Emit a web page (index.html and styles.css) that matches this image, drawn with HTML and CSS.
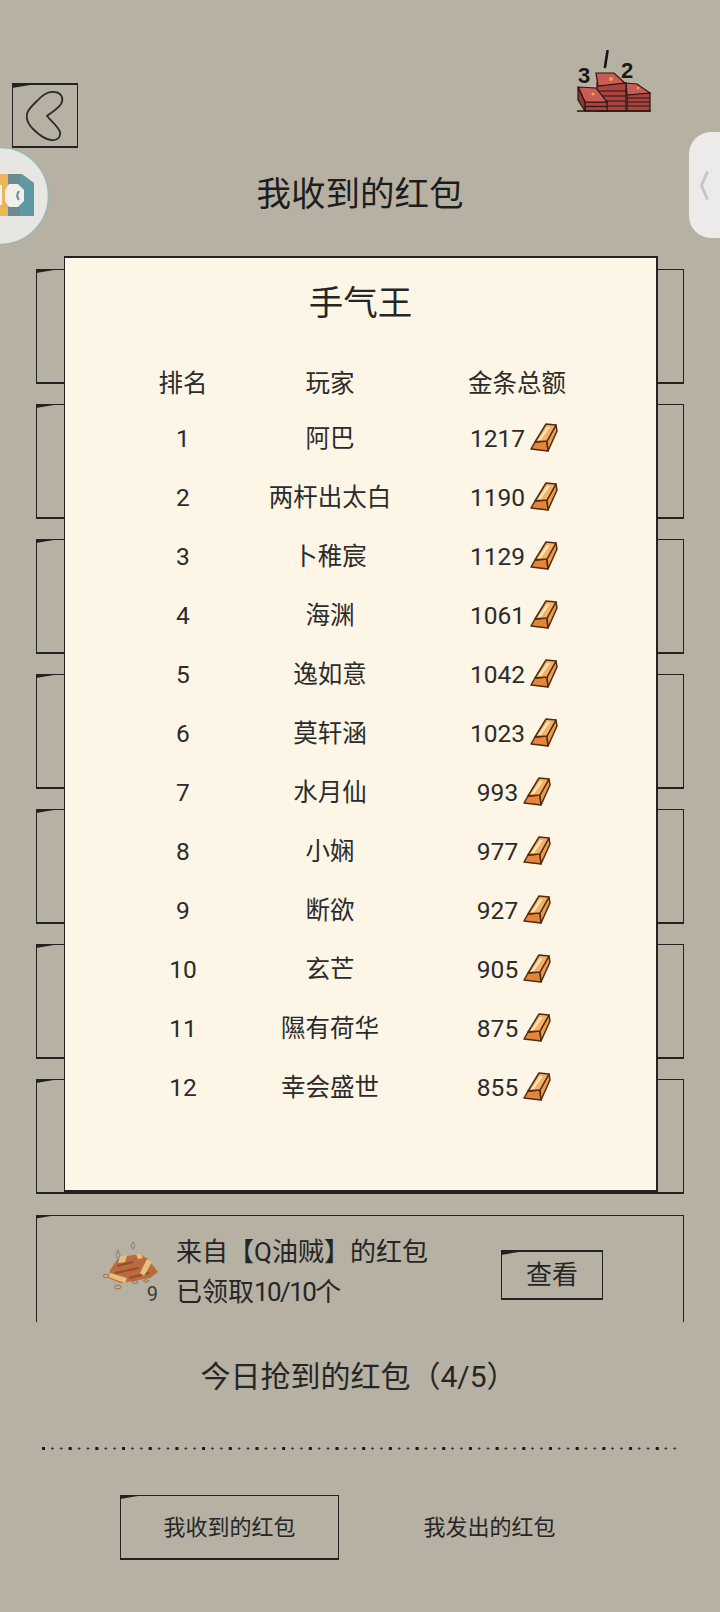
FILE: index.html
```html
<!DOCTYPE html>
<html lang="zh">
<head>
    <meta charset="utf-8">
    <title>我收到的红包</title>
    <link rel="stylesheet" href="styles.css">
</head>
<body>
    <svg class="defs" width="0" height="0">
        <symbol id="bar" viewBox="0 0 28 29">
            <polygon points="5,19 17,18 18,28 1,26" fill="#e5843a" stroke="#4f2c12" stroke-width="1.5" stroke-linejoin="round"/>
            <polygon points="17,18 26,2 27,8 18,28" fill="#ec9a50" stroke="#4f2c12" stroke-width="1.5" stroke-linejoin="round"/>
            <polygon points="5,19 16,1 26,2 17,18" fill="#f4b063" stroke="#4f2c12" stroke-width="1.5" stroke-linejoin="round"/>
            <polygon points="8,17 17,4 20,4 11,17" fill="#fde6bd"/>
        </symbol>
    </svg>

    <div class="float-logo">
        <svg width="50" height="98" viewBox="0 0 50 98">
            <circle cx="0" cy="49" r="48.5" fill="#e6e6e3" stroke="#9db6b1" stroke-width="1.5"/>
            <rect x="0" y="27" width="8" height="42" fill="#e9b65c"/>
            <polygon points="8,27 22,27 34,36 34,69 8,69" fill="#5f98a3"/>
            <rect x="8" y="27" width="12" height="42" fill="#6c8a90"/>
            <polygon points="9,37 18,37 24,43 24,54 18,60 9,60 5,54 5,43" fill="#f1f0eb"/>
            <path d="M19 44 Q15.5 48.5 19 53" fill="none" stroke="#6c8a90" stroke-width="2"/>
            <polygon points="0,38 2,38 2,58 0,58" fill="#f1f0eb"/>
        </svg>
    </div>
    <div class="side-handle">
        <svg width="9" height="31" viewBox="0 0 9 31"><path d="M7.5 1.5 L1.5 15.5 L7.5 29.5" fill="none" stroke="#c6c6c6" stroke-width="3"/></svg>
    </div>

    <div class="top-bar">
        <a class="back-btn brush">
            <svg width="64" height="62" viewBox="0 0 64 62"><path d="M24 16 C30 9 36 6 42 7 C49 8 51 14 48 19 C44 25 37 28 34 31 C38 36 45 41 47 47 C48 53 43 56 38 55 C31 54 24 48 20 44 C15 39 13 34 14 29 C15 24 20 20 24 16 Z" fill="none" stroke="#2b2b2b" stroke-width="1.8"/></svg>
        </a>
        <svg class="rank-icon" width="74" height="62" viewBox="0 0 74 62">
            <text x="1" y="33" class="rank-num">3</text>
            <text x="44" y="28" class="rank-num">2</text>
            <path d="M30.5 1 L28 17" stroke="#141414" stroke-width="2.6" stroke-linecap="round"/>
            <g stroke="#2a1512" stroke-width="1.2">
                <rect x="50" y="43" width="23" height="18" fill="#a9443f"/>
                <polygon points="49,33 60,34 73,43 50,45" fill="#c85d55"/>
                <path d="M50 48 H73 M50 52 H73 M50 56 H73"/>
                <rect x="20" y="33" width="29" height="28" fill="#a9443f"/>
                <polygon points="19,23 37,23 48,33 21,36" fill="#c85d55"/>
                <path d="M20 41 H49 M20 46 H49 M20 51 H49 M20 56 H49"/>
                <polygon points="8,52 30,52 30,61 8,61" fill="#a9443f"/>
                <polygon points="1,37 19,38 30,52 8,52" fill="#c85d55"/>
                <polygon points="1,37 8,52 8,61 1,50" fill="#8c3733"/>
                <path d="M8 56.5 H30"/>
            </g>
            <path d="M0 61 H74" stroke="#2a1512" stroke-width="1.5"/>
            <circle cx="34" cy="29" r="2" fill="#e8a84a"/>
            <circle cx="61" cy="38" r="1.5" fill="#e8a84a"/>
            <circle cx="16" cy="44" r="1.5" fill="#e8a84a"/>
        </svg>
    </div>

    <h1 class="page-title">我收到的红包</h1>

    <div class="board">
        <div class="slats">
            <div class="slat brush"></div>
            <div class="slat brush"></div>
            <div class="slat brush"></div>
            <div class="slat brush"></div>
            <div class="slat brush"></div>
            <div class="slat brush"></div>
            <div class="slat brush"></div>
        </div>
        <div class="paper">
            <h2 class="paper-title">手气王</h2>
            <div class="rank-row rank-head">
                <div>排名</div><div>玩家</div><div>金条总额</div>
            </div>
            <div class="rank-row"><div>1</div><div>阿巴</div><div class="amount">1217<svg class="bar"><use href="#bar"/></svg></div></div>
            <div class="rank-row"><div>2</div><div>两杆出太白</div><div class="amount">1190<svg class="bar"><use href="#bar"/></svg></div></div>
            <div class="rank-row"><div>3</div><div>卜稚宸</div><div class="amount">1129<svg class="bar"><use href="#bar"/></svg></div></div>
            <div class="rank-row"><div>4</div><div>海渊</div><div class="amount">1061<svg class="bar"><use href="#bar"/></svg></div></div>
            <div class="rank-row"><div>5</div><div>逸如意</div><div class="amount">1042<svg class="bar"><use href="#bar"/></svg></div></div>
            <div class="rank-row"><div>6</div><div>莫轩涵</div><div class="amount">1023<svg class="bar"><use href="#bar"/></svg></div></div>
            <div class="rank-row"><div>7</div><div>水月仙</div><div class="amount">993<svg class="bar"><use href="#bar"/></svg></div></div>
            <div class="rank-row"><div>8</div><div>小娴</div><div class="amount">977<svg class="bar"><use href="#bar"/></svg></div></div>
            <div class="rank-row"><div>9</div><div>断欲</div><div class="amount">927<svg class="bar"><use href="#bar"/></svg></div></div>
            <div class="rank-row"><div>10</div><div>玄芒</div><div class="amount">905<svg class="bar"><use href="#bar"/></svg></div></div>
            <div class="rank-row"><div>11</div><div>隰有荷华</div><div class="amount">875<svg class="bar"><use href="#bar"/></svg></div></div>
            <div class="rank-row"><div>12</div><div>幸会盛世</div><div class="amount">855<svg class="bar"><use href="#bar"/></svg></div></div>
        </div>
    </div>

    <div class="packet-card brush">
        <div class="pile">
            <svg width="56" height="50" viewBox="0 0 56 50">
                <path d="M15 8 L17 13 L15 18 L13 13 Z M30 0 L32 3.5 L30 7 L28 3.5 Z" fill="none" stroke="#8a8272" stroke-width="1"/>
                <polygon points="7,28 14,18 24,14 37,12 45,17 55,30 47,36 30,39 18,41 5,36" fill="#bb6a3e"/>
                <path d="M14 24 L30 20 M12 31 L36 26 M26 36 L46 31" stroke="#93502c" stroke-width="2.2"/>
                <polygon points="37,31 44,17 49,20 41,34" fill="#e6c07e"/>
                <polygon points="7,31 24,36 22,41 5,35" fill="#e6c07e"/>
                <polygon points="17,15 24,13 22,20 15,21" fill="#e6c07e"/>
                <polygon points="33,12 38,12 40,16 35,17" fill="#e6c07e"/>
                <ellipse cx="3" cy="34" rx="3" ry="1.6" fill="#cdb083" stroke="#8d4526" stroke-width=".6"/>
                <ellipse cx="15" cy="45" rx="3.2" ry="1.8" fill="#cdb083" stroke="#8d4526" stroke-width=".6"/>
                <ellipse cx="32" cy="40" rx="3" ry="1.4" fill="#cdb083" stroke="#8d4526" stroke-width=".6"/>
                <ellipse cx="43" cy="39" rx="2.6" ry="1.2" fill="#cdb083" stroke="#8d4526" stroke-width=".6"/>
            </svg>
            <span class="pile-count">9</span>
        </div>
        <div class="packet-text">
            <div>来自【Q油贼】的红包</div>
            <div>已领取<span class="ratio">10/10</span>个</div>
        </div>
        <a class="view-btn brush">查看</a>
    </div>

    <h2 class="today-title">今日抢到的红包（4/5）</h2>
    <div class="dots"></div>

    <div class="tabs">
        <a class="tab tab-active brush">我收到的红包</a>
        <a class="tab">我发出的红包</a>
    </div>
</body>
</html>
```

FILE: styles.css
```css
html,
body {
    margin: 0;
    padding: 0;
}

body {
    position: relative;
    width: 720px;
    height: 1612px;
    overflow: hidden;
    background-color: #b7b1a3;
    color: #262626;
    font-family: Roboto, "Noto Sans CJK SC", sans-serif;
}

h1,
h2 {
    margin: 0;
    font-weight: 400;
    text-align: center;
}

.defs {
    position: absolute;
}

/* thick tapered stroke at the top left of the hand drawn boxes */
.brush {
    position: relative;
}

.brush::before {
    content: "";
    position: absolute;
    left: -1px;
    top: -1px;
    width: 24px;
    height: 4px;
    background-color: #222;
    clip-path: polygon(0 0, 100% 0, 0 100%);
}

.float-logo {
    position: absolute;
    left: 0;
    top: 147px;
    height: 98px;
}

.side-handle {
    position: absolute;
    right: 0;
    top: 132px;
    width: 31px;
    height: 106px;
    display: flex;
    align-items: center;
    justify-content: flex-start;
    padding-left: 11px;
    box-sizing: border-box;
    background-color: #ecebea;
    border-radius: 22px 0 0 22px;
}

.top-bar {
    display: flex;
    justify-content: space-between;
    align-items: flex-start;
    padding: 50px 69px 0 12px;
}

.back-btn {
    display: block;
    width: 66px;
    height: 65px;
    margin-top: 33px;
    box-sizing: border-box;
    border: 1px solid #222;
    border-top-width: 2px;
    border-bottom-width: 2px;
    border-right-width: 1.5px;
}

.rank-icon {
    display: block;
}

.rank-num {
    font-family: "Liberation Sans", sans-serif;
    font-size: 22px;
    font-weight: 700;
    fill: #181818;
}

.page-title {
    margin-top: 21px;
    font-size: 34.5px;
    line-height: 50px;
    color: #1d1d1d;
}

.board {
    position: relative;
    height: 938px;
    margin: 37px 36px 0;
}

.slats {
    position: absolute;
    inset: 13px 0 0 0;
    display: flex;
    flex-direction: column;
    gap: 20px;
}

.slat {
    height: 115px;
    box-sizing: border-box;
    border: 1px solid #222;
    border-bottom-width: 2px;
    border-right-width: 1.5px;
}

.paper {
    position: relative;
    height: 936px;
    margin: 0 26px 0 28px;
    box-sizing: border-box;
    padding-top: 20px;
    background-color: #fdf6e6;
    border: 1px solid #222;
    border-top-width: 2px;
    border-bottom-width: 2px;
    border-right-width: 2px;
}

.paper-title {
    font-size: 34.5px;
    line-height: 50px;
    margin-bottom: 30px;
}

.rank-row {
    display: grid;
    grid-template-columns: 150px 144px 230px;
    padding-left: 43px;
    height: 59px;
    align-items: center;
    text-align: center;
    font-size: 24.5px;
    line-height: 36px;
    color: #2b2b2b;
}

.rank-head {
    height: 51px;
}

.amount {
    display: flex;
    align-items: center;
    justify-content: center;
    gap: 5px;
    padding-right: 6px;
}

.bar {
    width: 28px;
    height: 29px;
    margin-top: -3px;
}

.packet-card {
    display: flex;
    align-items: flex-start;
    height: 107px;
    margin: 20.5px 36px 0;
    padding: 16px 80px 0 66px;
    box-sizing: border-box;
    border: 1px solid #222;
    border-top-width: 1.5px;
    border-bottom: none;
}

.pile {
    position: relative;
    width: 56px;
    height: 50px;
    margin-top: 10.5px;
    margin-right: 17px;
}

.pile-count {
    position: absolute;
    right: 1px;
    top: 40px;
    font-size: 20px;
    line-height: 24px;
    color: #3c3c3c;
}

.packet-text {
    font-size: 26px;
    line-height: 40px;
    white-space: nowrap;
}

.ratio {
    letter-spacing: -1.6px;
}

.view-btn {
    display: block;
    width: 102px;
    height: 50px;
    margin-top: 18.5px;
    margin-left: auto;
    box-sizing: border-box;
    border: 1px solid #222;
    border-top-width: 2px;
    border-bottom-width: 2px;
    font-size: 26px;
    line-height: 46px;
    text-align: center;
}

.today-title {
    margin-top: 30px;
    font-size: 30px;
    line-height: 50px;
    padding-right: 3px;
}

.dots {
    height: 3px;
    margin: 45.5px 42px 0;
    background-image:
        radial-gradient(circle at 1.5px 1.5px, #1c1c1c 1.5px, transparent 1.9px),
        radial-gradient(circle at 1.5px 1.5px, #2a2a2a .9px, transparent 1.4px);
    background-size: 26.7px 3px, 8.9px 3px;
}

.tabs {
    display: flex;
    gap: 41px;
    margin-top: 45px;
    padding-left: 120px;
}

.tab {
    display: block;
    width: 219px;
    height: 65px;
    box-sizing: border-box;
    border: 1px solid transparent;
    font-size: 22px;
    line-height: 63px;
    text-align: center;
}

.tab-active {
    border-color: #222;
    border-top-width: 1.5px;
    border-bottom-width: 2px;
}
```
